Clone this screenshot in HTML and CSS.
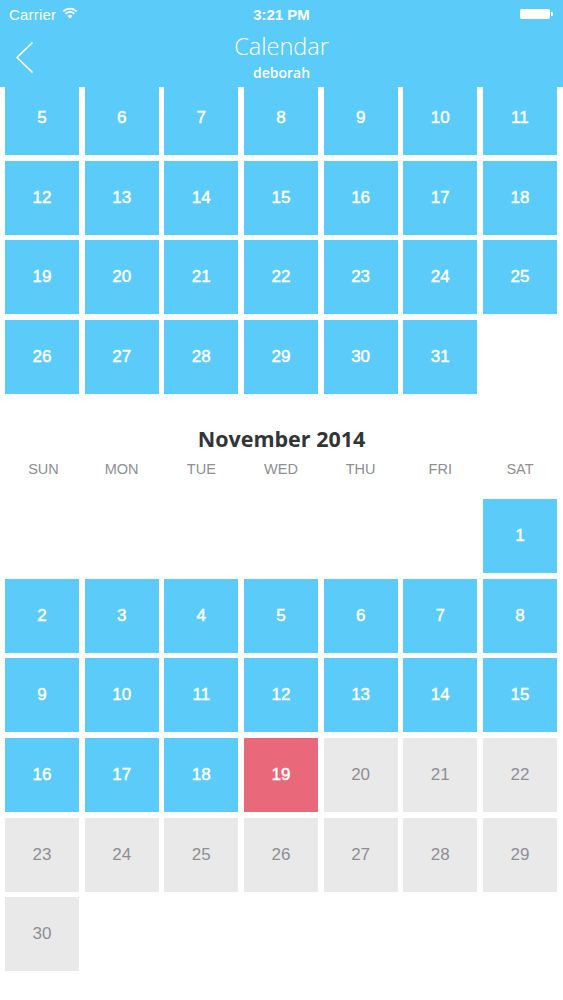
FILE: index.html
```html
<!DOCTYPE html>
<html>
<head>
<meta charset="utf-8">
<link rel="stylesheet" href="styles.css">
</head>
<body>
<div class="app">
  <header class="topbar">
    <div class="status">
      <div class="status-left">
        <span class="carrier">Carrier</span>
        <svg class="wifi" width="16" height="12" viewBox="0 0 16 12">
          <path d="M8 11.5 L5.6 8.9 A3.4 3.4 0 0 1 10.4 8.9 Z" fill="#fff"/>
          <path d="M3.6 6.8 A6.2 6.2 0 0 1 12.4 6.8" stroke="#fff" stroke-width="1.8" fill="none"/>
          <path d="M1.3 4.4 A9.5 9.5 0 0 1 14.7 4.4" stroke="#fff" stroke-width="1.8" fill="none"/>
        </svg>
      </div>
      <div class="time">3:21 PM</div>
      <div class="status-right">
        <span class="battery"></span><span class="nub"></span>
      </div>
    </div>
    <div class="nav">
      <svg class="back" width="20" height="34" viewBox="0 0 20 34">
        <path d="M17 2 L2 16.5 L17 31" stroke="#fff" stroke-width="1.7" fill="none" stroke-linecap="round" stroke-linejoin="round"/>
      </svg>
      <div class="title">
        <div class="title-main">Calendar</div>
        <div class="title-sub">deborah</div>
      </div>
    </div>
  </header>
  <main class="scroller">
    <div class="content">
      <div class="grid">
        <div class="cell">5</div><div class="cell">6</div><div class="cell">7</div><div class="cell">8</div><div class="cell">9</div><div class="cell">10</div><div class="cell">11</div>
        <div class="cell">12</div><div class="cell">13</div><div class="cell">14</div><div class="cell">15</div><div class="cell">16</div><div class="cell">17</div><div class="cell">18</div>
        <div class="cell">19</div><div class="cell">20</div><div class="cell">21</div><div class="cell">22</div><div class="cell">23</div><div class="cell">24</div><div class="cell">25</div>
        <div class="cell">26</div><div class="cell">27</div><div class="cell">28</div><div class="cell">29</div><div class="cell">30</div><div class="cell">31</div><div class="empty"></div>
      </div>
      <section class="month">
        <h2 class="month-title">November 2014</h2>
        <div class="weekdays">
          <span>SUN</span><span>MON</span><span>TUE</span><span>WED</span><span>THU</span><span>FRI</span><span>SAT</span>
        </div>
        <div class="grid">
          <div class="empty"></div><div class="empty"></div><div class="empty"></div><div class="empty"></div><div class="empty"></div><div class="empty"></div><div class="cell">1</div>
          <div class="cell">2</div><div class="cell">3</div><div class="cell">4</div><div class="cell">5</div><div class="cell">6</div><div class="cell">7</div><div class="cell">8</div>
          <div class="cell">9</div><div class="cell">10</div><div class="cell">11</div><div class="cell">12</div><div class="cell">13</div><div class="cell">14</div><div class="cell">15</div>
          <div class="cell">16</div><div class="cell">17</div><div class="cell">18</div><div class="cell today">19</div><div class="cell future">20</div><div class="cell future">21</div><div class="cell future">22</div>
          <div class="cell future">23</div><div class="cell future">24</div><div class="cell future">25</div><div class="cell future">26</div><div class="cell future">27</div><div class="cell future">28</div><div class="cell future">29</div>
          <div class="cell future">30</div>
        </div>
      </section>
    </div>
  </main>
</div>
</body>
</html>
```
FILE: styles.css
```css
* { box-sizing: border-box; }
html, body { margin: 0; padding: 0; background: #fff; }
body { font-family: "Liberation Sans", Arial, sans-serif; }

.app { width: 563px; height: 1000px; display: flex; flex-direction: column; overflow: hidden; }

.topbar { background: #5bcbfa; color: #fff; height: 87px; flex: none; position: relative; z-index: 2; }

.status { height: 28px; display: flex; align-items: center; justify-content: space-between; padding: 0 9px; position: relative; }
.status-left { display: flex; align-items: center; gap: 5px; font-size: 15px; }
.carrier { letter-spacing: 0.2px; }
.wifi { margin-top: -2px; margin-left: 1px; }
.time { position: absolute; left: 0; right: 0; text-align: center; font-size: 15px; font-weight: bold; pointer-events: none; }
.status-right { display: flex; align-items: center; padding-right: 1px; }
.battery { width: 30px; height: 10px; background: #fff; border-radius: 2px; }
.nub { width: 2px; height: 4px; background: #fff; margin-left: 1px; border-radius: 0 1px 1px 0; }

.nav { height: 59px; position: relative; }
.back { position: absolute; left: 15px; top: 13px; }
.title { text-align: center; font-family: "Open Sans", sans-serif; padding-top: 5px; }
.title-main { font-size: 23.5px; font-weight: 300; line-height: 26px; }
.title-sub { font-size: 14px; font-weight: 600; line-height: 17px; margin-top: 4.5px; }

.scroller { flex: 1; overflow: hidden; position: relative; }
.content { margin-top: -6px; }

.grid { display: grid; grid-template-columns: repeat(7, 74px); column-gap: 5.67px; row-gap: 5.67px; padding: 0 5px; grid-auto-rows: 74px; }
.cell { background: #5bcbfa; color: #fff; display: flex; align-items: center; justify-content: center; font-size: 17px; font-weight: normal; -webkit-text-stroke: 0.45px #fff; }
.cell.today { background: #e9687a; }
.cell.future { background: #e9e9ea; color: #8e8e93; -webkit-text-stroke: 0; }

.month { padding-top: 31px; }
.month-title { margin: 0; text-align: center; font-family: "Open Sans", sans-serif; font-weight: 700; font-size: 21.5px; line-height: 27px; color: #333438; }
.weekdays { display: grid; grid-template-columns: repeat(7, 74px); column-gap: 5.67px; padding: 0 5px; margin-top: 7px; margin-bottom: 20px; }
.weekdays span { text-align: center; font-size: 14.5px; color: #8e8e93; line-height: 20px; }
.weekdays span:first-child { padding-left: 3px; }
```
